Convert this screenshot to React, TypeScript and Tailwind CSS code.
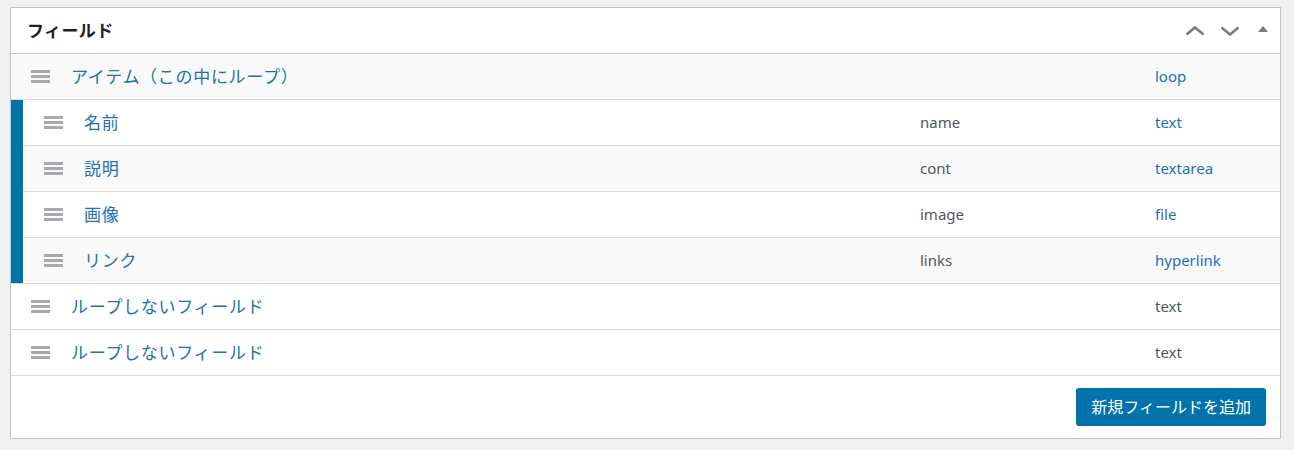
import React from "react";

const FONT = { fontFamily: '"Noto Sans", "Noto Sans CJK JP", sans-serif' };

function Drag() {
  return (
    <div className="flex w-[19px] flex-col gap-[2px] shrink-0">
      <div className="h-[3px] bg-[#a7aaad]" />
      <div className="h-[3px] bg-[#a7aaad]" />
      <div className="h-[3px] bg-[#a7aaad]" />
    </div>
  );
}

type Row = { label: string; key?: string; type: string; alt?: boolean };

function FieldRow({ r, nested }: { r: Row; nested?: boolean }) {
  return (
    <div
      className={`flex h-[45px] items-center ${r.alt ? "bg-[#f9f9f9]" : "bg-white"} ${nested ? "pl-[21px]" : "pl-[20px]"}`}
    >
      <Drag />
      <div className="ml-[21px] flex-1 text-[17px] tracking-[0.7px] text-[#2271b1]">{r.label}</div>
      <div className="w-[235px] text-[15px] text-[#50575e]">{r.key ?? ""}</div>
      <div className={`w-[125px] text-[15px] ${nested || r.type === "loop" ? "text-[#2271b1]" : "text-[#50575e]"}`}>{r.type}</div>
    </div>
  );
}

export default function App() {
  const nested: Row[] = [
    { label: "名前", key: "name", type: "text" },
    { label: "説明", key: "cont", type: "textarea", alt: true },
    { label: "画像", key: "image", type: "file" },
    { label: "リンク", key: "links", type: "hyperlink", alt: true },
  ];
  return (
    <div className="min-h-[450px] bg-[#f0f0f1] pt-[7px]" style={FONT}>
      <div className="ml-[10px] w-[1271px] border border-[#c3c4c7] bg-white">
        <div className="flex h-[46px] items-center border-b border-[#c3c4c7] pl-[16px] pr-[12px]">
          <h2 className="flex-1 text-[17px] font-bold tracking-[0.4px] text-[#1d2327]">フィールド</h2>
          <div className="flex items-center">
            <svg width="20" height="10" viewBox="0 0 20 10" className="mr-[15px]">
              <path d="M1.5 8.5 L10 1.5 L18.5 8.5" fill="none" stroke="#787c82" strokeWidth="2.6" />
            </svg>
            <svg width="20" height="10" viewBox="0 0 20 10" className="mr-[18px]">
              <path d="M1.5 1.5 L10 8.5 L18.5 1.5" fill="none" stroke="#787c82" strokeWidth="2.6" />
            </svg>
            <svg width="10" height="6" viewBox="0 0 10 6" className="mb-[3px]">
              <path d="M0 6 L5 0 L10 6 Z" fill="#787c82" />
            </svg>
          </div>
        </div>
        <div className="border-b border-[#dcdcde]">
          <FieldRow r={{ label: "アイテム（この中にループ）", type: "loop", alt: true }} />
        </div>
        <div className="border-b border-[#dcdcde]">
          <div className="border-l-[12px] border-[#0073aa]">
            {nested.map((r, i) => (
              <div key={i} className={i < nested.length - 1 ? "border-b border-[#dcdcde]" : ""}>
                <FieldRow r={r} nested />
              </div>
            ))}
          </div>
        </div>
        <div className="border-b border-[#dcdcde]">
          <FieldRow r={{ label: "ループしないフィールド", type: "text" }} />
        </div>
        <div className="border-b border-[#dcdcde]">
          <FieldRow r={{ label: "ループしないフィールド", type: "text" }} />
        </div>
        <div className="flex h-[62px] items-start justify-end pr-[14px] pt-[12px]">
          <button className="h-[38px] rounded-[3px] bg-[#0073aa] px-[15px] text-[16px] text-white">
            新規フィールドを追加
          </button>
        </div>
      </div>
    </div>
  );
}
